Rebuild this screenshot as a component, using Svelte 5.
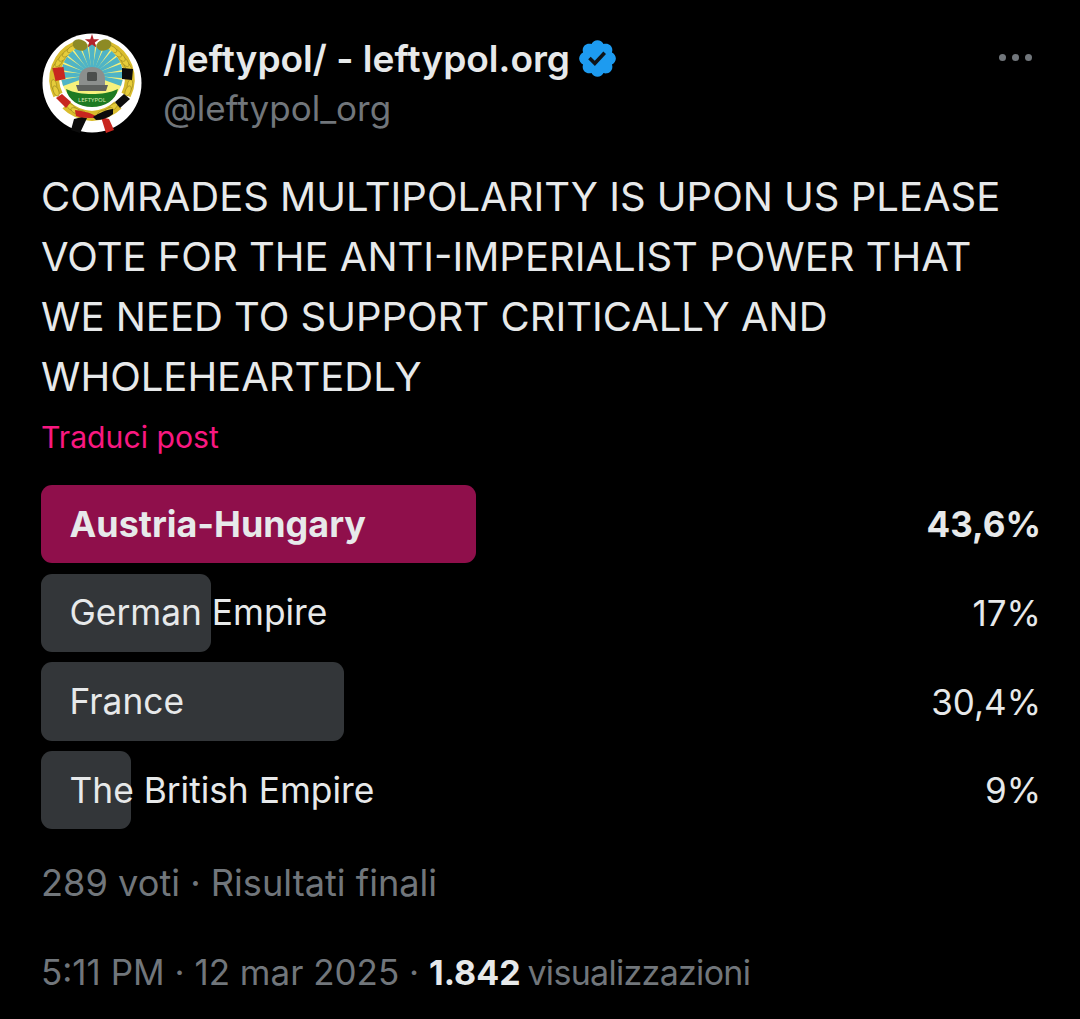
<script>
  const options = [
    { label: 'Austria-Hungary', pct: '43,6%', width: 435, winner: true },
    { label: 'German Empire', pct: '17%', width: 170 },
    { label: 'France', pct: '30,4%', width: 303 },
    { label: 'The British Empire', pct: '9%', width: 90 }
  ];

  const rays = Array.from({ length: 15 }, (_, i) => -105 + i * 15);
  // wreath leaves, left side only: the right side is mirrored
  const leaves = [
    [14, 34, -58], [17, 29, -52], [21, 24, -46], [25, 20, -40], [30, 16, -32],
    [12, 52, 80], [14, 58, 68], [29, 74, 38], [34, 78, 26], [39, 80, 14]
  ];
</script>

<main class="post">
  <header class="head">
    <svg class="avatar" width="100" height="100" viewBox="0 0 100 100">
      <circle cx="50" cy="50" r="49.5" fill="#fff" />
      <path d="M16 62A36 36 0 0 1 34 13" fill="none" stroke="#d9bc2c" stroke-width="10" />
      <path d="M84 62A36 36 0 0 0 66 13" fill="none" stroke="#d9bc2c" stroke-width="10" />
      <path d="M24 72C30 78 38 82 50 83C62 82 70 78 76 72" fill="none" stroke="#d9bc2c" stroke-width="10" />
      {#each leaves as [x, y, r]}
        <ellipse cx={x} cy={y} rx="5.5" ry="2.6" fill="#e6cc3a" stroke="#8a7a1c" stroke-width=".5" transform="rotate({r} {x} {y})" />
        <ellipse cx={100 - x} cy={y} rx="5.5" ry="2.6" fill="#e6cc3a" stroke="#8a7a1c" stroke-width=".5" transform="rotate({-r} {100 - x} {y})" />
      {/each}
      <circle cx="50" cy="42" r="31" fill="#f6f17c" />
      {#each rays as a}
        <path d="M49.4 42L46.8 11.2h6.4L50.6 42Z" fill="#4fb4c6" transform="rotate({a} 50 42)" />
      {/each}
      <ellipse cx="38" cy="12" rx="7.5" ry="5.5" fill="#8d8a24" transform="rotate(15 38 12)" />
      <ellipse cx="62" cy="12" rx="7.5" ry="5.5" fill="#8d8a24" transform="rotate(-15 62 12)" />
      <path d="M50 1l1.7 5.2h5.5l-4.4 3.2 1.7 5.2-4.5-3.2-4.5 3.2 1.7-5.2-4.4-3.2h5.5Z" fill="#b3242c" />
      <path d="M10.5 35l11-1 2 12-10 2Z" fill="#c8261f" />
      <path d="M80 35l11 1-1 11-10-1Z" fill="#0c0c0c" />
      <path d="M14 65l6-4 9 8-5 6Z" fill="#c8261f" />
      <path d="M88 66l-6-5-9 8 5 6Z" fill="#0c0c0c" />
      <path d="M32 86l8-2 5 1-7 15-9-3Z" fill="#0c0c0c" />
      <path d="M59 84l8 2 5 11-8 3Z" fill="#c8261f" />
      <path d="M33 77c6 1 14 2 21 6l-2 2c-6 0-13 0-18-2Z" fill="#c8261f" />
      <path d="M71 76c-5 0-14 4-20 8l3 3c6 0 12-2 17-6Z" fill="#0c0c0c" />
      <path d="M24 56c8 4 17 5 26 5s18-1 26-5c-2 11-13 18-26 18S26 67 24 56Z" fill="#1d7a22" />
      <text x="50" y="69" text-anchor="middle" class="badge">LEFTYPOL</text>
      <path d="M37 52V46c0-8 6-12 13-12s13 4 13 12v6Z" fill="#8c8f8d" />
      <rect x="45" y="39" width="10" height="9" rx="1.5" fill="#4b4e4c" />
      <path d="M34 52h32l-2 6H36Z" fill="#5f625f" />
    </svg>
    <div class="names">
      <div class="display">
        <span>/leftypol/ - leftypol.org</span>
        <svg class="check" width="43" height="43" viewBox="0 0 22 22">
          <path fill="#1d9bf0" d="M20.396 11c-.018-.646-.215-1.275-.57-1.816-.354-.54-.852-.972-1.438-1.246.223-.607.27-1.264.14-1.897-.131-.634-.437-1.218-.882-1.687-.47-.445-1.053-.75-1.687-.882-.633-.13-1.29-.083-1.897.14-.273-.587-.704-1.086-1.245-1.44S11.647 1.62 11 1.604c-.646.017-1.273.213-1.813.568s-.969.854-1.24 1.44c-.608-.223-1.267-.272-1.902-.14-.635.13-1.22.436-1.69.882-.445.47-.749 1.055-.878 1.688-.13.633-.08 1.29.144 1.896-.587.274-1.087.705-1.443 1.245-.356.54-.555 1.17-.574 1.817.02.647.218 1.276.574 1.817.356.54.856.972 1.443 1.245-.224.606-.274 1.263-.144 1.896.13.634.433 1.218.877 1.688.47.443 1.054.747 1.687.878.633.132 1.29.084 1.897-.136.274.586.705 1.084 1.246 1.439.54.354 1.17.551 1.816.569.647-.016 1.276-.213 1.817-.567s.972-.854 1.245-1.44c.604.239 1.266.296 1.903.164.636-.132 1.22-.447 1.68-.907.46-.46.776-1.044.908-1.681s.075-1.299-.165-1.903c.586-.274 1.084-.705 1.439-1.246.354-.54.551-1.17.569-1.816z" />
          <path fill="#0f1419" d="M9.662 14.85l-3.429-3.428 1.293-1.302 2.072 2.072 4.4-4.794 1.347 1.246z" />
        </svg>
      </div>
      <div class="handle">@leftypol_org</div>
    </div>
    <div class="more"><i></i><i></i><i></i></div>
  </header>

  <p class="text">COMRADES MULTIPOLARITY IS UPON US PLEASE VOTE FOR THE ANTI-IMPERIALIST POWER THAT WE NEED TO SUPPORT CRITICALLY AND WHOLEHEARTEDLY</p>
  <div class="translate">Traduci post</div>

  <div class="poll">
    {#each options as opt}
      <div class="option" class:winner={opt.winner}>
        <div class="bar" style="width: {opt.width}px"></div>
        <span class="label">{opt.label}</span>
        <span class="pct">{opt.pct}</span>
      </div>
    {/each}
  </div>

  <div class="votes">289 voti · Risultati finali</div>

  <div class="meta">5:11 PM · 12 mar 2025 · <b>1.842</b> <span class="views">visualizzazioni</span></div>
</main>

<style>
  :global(body) {
    background: #000;
  }

  .post {
    height: 1019px;
    box-sizing: border-box;
    padding: 33px 41px 0;
    background: #000;
    color: #e7e9ea;
    font-family: Inter, sans-serif;
    overflow: hidden;
  }

  .head {
    display: flex;
    align-items: flex-start;
  }

  .avatar {
    flex: none;
    margin-left: 1px;
  }

  .names {
    margin-left: 21px;
    flex: 1;
  }

  .display {
    display: flex;
    align-items: center;
    gap: 6px;
    height: 50px;
    font-size: 37.1px;
    font-weight: 600;
  }

  .handle {
    font-size: 35px;
    line-height: 50px;
    color: #71767b;
  }

  .more {
    display: flex;
    gap: 6px;
    margin: 21px 7px 0 0;
  }

  .more i {
    width: 7px;
    height: 7px;
    border-radius: 50%;
    background: #71767b;
  }

  .text {
    margin: 34px 0 0;
    font-size: 40px;
    line-height: 60px;
  }

  .translate {
    margin-top: 6px;
    font-size: 30.2px;
    line-height: 48px;
    color: #f91880;
  }

  .poll {
    display: flex;
    flex-direction: column;
    gap: 10.3px;
    margin-top: 24px;
  }

  .option {
    position: relative;
    display: flex;
    justify-content: space-between;
    align-items: center;
    height: 78.4px;
    padding-left: 28.5px;
    font-size: 35.3px;
  }

  .bar {
    position: absolute;
    left: 0;
    top: 0;
    height: 100%;
    border-radius: 11px;
    background: #333639;
  }

  .winner .bar {
    background: #8f0f4b;
  }

  .winner {
    font-weight: 700;
  }

  .winner .label {
    font-size: 35.9px;
  }

  .label,
  .pct {
    position: relative;
  }

  .pct {
    font-size: 35px;
    right: -2px;
  }

  .votes {
    margin-top: 29px;
    font-size: 36.2px;
    line-height: 50px;
    color: #71767b;
  }

  .meta {
    margin-top: 39px;
    font-size: 35px;
    line-height: 50px;
    color: #71767b;
  }

  .meta b {
    font-size: 34px;
    color: #e7e9ea;
    font-weight: 700;
  }

  .views {
    font-size: 34px;
    letter-spacing: -0.7px;
    margin-left: -3px;
  }

  .badge {
    font-family: "Noto Sans", sans-serif;
    font-size: 6px;
    fill: #d9e8b0;
  }
</style>
